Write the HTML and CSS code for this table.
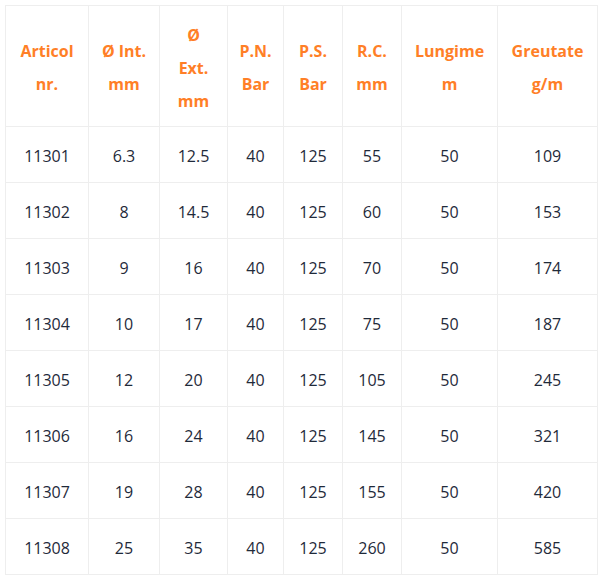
FILE: index.html
```html
<!DOCTYPE html>
<html>
<head>
<meta charset="utf-8">
<link rel="stylesheet" href="styles.css">
</head>
<body>
<table class="spec">
<colgroup>
<col class="c1"><col class="c2"><col class="c3"><col class="c4"><col class="c5"><col class="c6"><col class="c7"><col class="c8">
</colgroup>
<thead>
<tr>
<th>Articol<br>nr.</th>
<th>Ø Int.<br>mm</th>
<th>Ø<br>Ext.<br>mm</th>
<th>P.N.<br>Bar</th>
<th>P.S.<br>Bar</th>
<th>R.C.<br>mm</th>
<th>Lungime<br>m</th>
<th>Greutate<br>g/m</th>
</tr>
</thead>
<tbody>
<tr><td>11301</td><td>6.3</td><td>12.5</td><td>40</td><td>125</td><td>55</td><td>50</td><td>109</td></tr>
<tr><td>11302</td><td>8</td><td>14.5</td><td>40</td><td>125</td><td>60</td><td>50</td><td>153</td></tr>
<tr><td>11303</td><td>9</td><td>16</td><td>40</td><td>125</td><td>70</td><td>50</td><td>174</td></tr>
<tr><td>11304</td><td>10</td><td>17</td><td>40</td><td>125</td><td>75</td><td>50</td><td>187</td></tr>
<tr><td>11305</td><td>12</td><td>20</td><td>40</td><td>125</td><td>105</td><td>50</td><td>245</td></tr>
<tr><td>11306</td><td>16</td><td>24</td><td>40</td><td>125</td><td>145</td><td>50</td><td>321</td></tr>
<tr><td>11307</td><td>19</td><td>28</td><td>40</td><td>125</td><td>155</td><td>50</td><td>420</td></tr>
<tr><td>11308</td><td>25</td><td>35</td><td>40</td><td>125</td><td>260</td><td>50</td><td>585</td></tr>
</tbody>
</table>
</body>
</html>
```
FILE: styles.css
```css
html, body {
  margin: 0;
  background: #fff;
}
body {
  padding: 5px;
  font-family: "Open Sans", "DejaVu Sans", sans-serif;
  font-size: 16px;
  color: #1f2a3a;
}
.spec {
  border-collapse: collapse;
  table-layout: fixed;
  width: 592px;
}
.c1 { width: 83px; }
.c2 { width: 71px; }
.c3 { width: 68px; }
.c4 { width: 56px; }
.c5 { width: 59px; }
.c6 { width: 59px; }
.c7 { width: 96px; }
.c8 { width: 100px; }
.spec th,
.spec td {
  border: 1px solid #eeeeee;
  text-align: center;
  vertical-align: middle;
  line-height: 33px;
  padding: 4px 0 0;
}
.spec th {
  height: 116px;
  color: #ff7f27;
  font-weight: bold;
}
.spec td {
  height: 51px;
}
```
